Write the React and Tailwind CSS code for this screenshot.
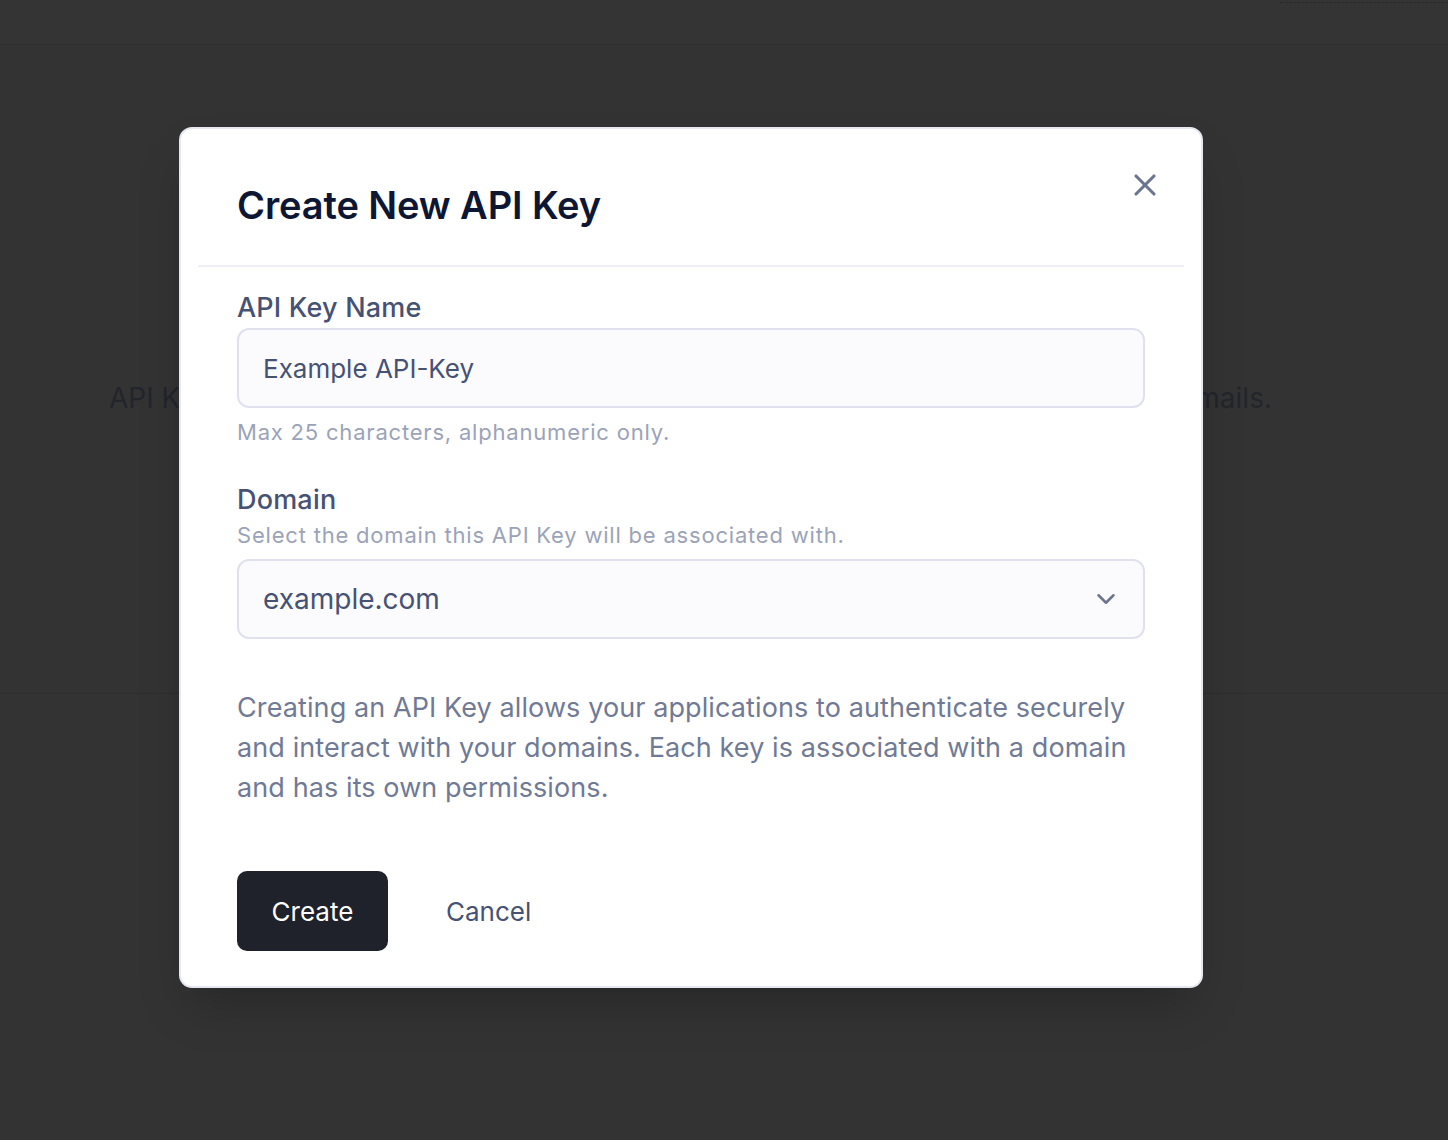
import { X, ChevronDown } from "lucide-react";

const font = { fontFamily: "Inter, 'Noto Sans', sans-serif" };

const Backdrop = () => {
  return (
    <div className="min-h-[1140px] bg-[#333333] text-[#23252c]">
      <div className="h-[45px] border-b border-[#2f2f2f] bg-[#343434] flex justify-end">
        <div className="h-[3px] w-[168px] border-b border-dotted border-[#262626]" />
      </div>
      <div className="pt-[332px] pl-[109px] pr-[176px] flex justify-between text-[28px] whitespace-nowrap">
        <span>API Keys let your applications</span>
        <span>send and receive emails.</span>
      </div>
      <div className="mt-[274px] border-b border-[#2d2d2d]" />
    </div>
  );
};

const CreateKeyModal = () => {
  return (
    <div className="absolute left-[179px] top-[127px] w-[1024px] rounded-[13px] border-2 border-[#e6e8f1] bg-white shadow-2xl">
      <button className="absolute right-[38px] top-[38px] text-[#6b7590]">
        <X size={36} strokeWidth={2.1} />
      </button>
      <div className="mx-[17px] border-b-2 border-[#eef0f5] pl-[39px] pt-[52px] pb-[36px]">
        <h2 className="text-[38px] leading-[48px] font-semibold text-[#0d1733] tracking-[-0.1px]">
          Create New API Key
        </h2>
      </div>
      <div className="px-[56px] pt-[25px] pb-[35px]">
        <label className="block text-[27px] leading-[32px] font-medium text-[#465274] tracking-[0.2px]">
          API Key Name
        </label>
        <div className="mt-1 h-[80px] rounded-[12px] border-2 border-[#dfe2ee] bg-[#fbfbfd] pl-[24px] flex items-center text-[26px] text-[#465274]">
          Example API-Key
        </div>
        <p className="mt-[10px] text-[22px] leading-[28px] text-[#9ba3b9] tracking-[0.8px]">
          Max 25 characters, alphanumeric only.
        </p>
        <label className="mt-[38px] block text-[27px] leading-[32px] font-medium text-[#465274] tracking-[0.2px]">
          Domain
        </label>
        <p className="mt-[5px] text-[22px] leading-[28px] text-[#9ba3b9] tracking-[0.8px]">
          Select the domain this API Key will be associated with.
        </p>
        <div className="mt-[10px] h-[80px] rounded-[12px] border-2 border-[#dfe2ee] bg-[#fbfbfd] pl-[24px] pr-[22px] flex items-center justify-between text-[28px] text-[#465274]">
          <span>example.com</span>
          <ChevronDown size={30} strokeWidth={2} className="text-[#6b7590]" />
        </div>
        <p className="mt-[49px] text-[27px] leading-[40px] text-[#707a95] tracking-[0.1px]">
          Creating an API Key allows your applications to authenticate securely
          and interact with your domains. Each key is associated with a domain
          and has its own permissions.
        </p>
        <div className="mt-[63px] flex items-center gap-[58px]">
          <button className="h-[80px] w-[151px] rounded-[10px] bg-[#1f222a] text-[26px] text-white">
            Create
          </button>
          <button className="text-[26px] text-[#465274]">Cancel</button>
        </div>
      </div>
    </div>
  );
};

const App = () => {
  return (
    <div className="relative min-h-[1140px]" style={font}>
      <Backdrop />
      <CreateKeyModal />
    </div>
  );
};

export default App;
